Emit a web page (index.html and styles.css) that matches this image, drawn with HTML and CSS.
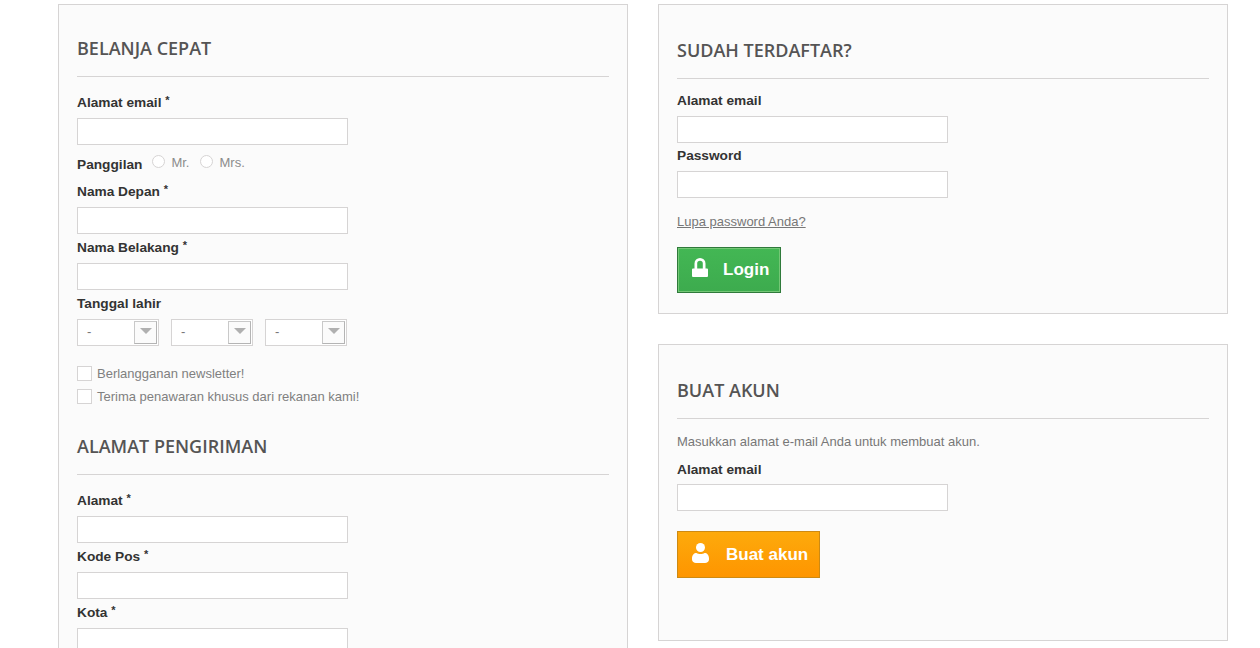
FILE: index.html
```html
<!DOCTYPE html>
<html lang="id">
<head>
<meta charset="utf-8">
<title>Belanja Cepat</title>
<link rel="stylesheet" href="styles.css">
</head>
<body>
<main class="page">
  <section class="box box-left">
    <h3 class="title">BELANJA CEPAT</h3>
    <label class="lbl lbl-first">Alamat email <sup>*</sup></label>
    <input class="field" type="text">
    <div class="gender">
      <span class="lbl">Panggilan</span>
      <span class="radio"></span><span class="opt">Mr.</span>
      <span class="radio"></span><span class="opt">Mrs.</span>
    </div>
    <label class="lbl lbl-name">Nama Depan <sup>*</sup></label>
    <input class="field" type="text">
    <label class="lbl">Nama Belakang <sup>*</sup></label>
    <input class="field" type="text">
    <label class="lbl">Tanggal lahir</label>
    <div class="dates">
      <div class="sel"><span>-</span><i class="arrow"></i></div>
      <div class="sel"><span>-</span><i class="arrow"></i></div>
      <div class="sel"><span>-</span><i class="arrow"></i></div>
    </div>
    <div class="check check-first"><span class="cb"></span>Berlangganan newsletter!</div>
    <div class="check"><span class="cb"></span>Terima penawaran khusus dari rekanan kami!</div>
    <h3 class="title title-sub">ALAMAT PENGIRIMAN</h3>
    <label class="lbl lbl-first">Alamat <sup>*</sup></label>
    <input class="field" type="text">
    <label class="lbl">Kode Pos <sup>*</sup></label>
    <input class="field" type="text">
    <label class="lbl">Kota <sup>*</sup></label>
    <input class="field" type="text">
  </section>
  <div class="col-right">
    <section class="box box-login">
      <h3 class="title">SUDAH TERDAFTAR?</h3>
      <label class="lbl lbl-tight">Alamat email</label>
      <input class="field" type="text">
      <label class="lbl lbl-pass">Password</label>
      <input class="field" type="password">
      <a class="forgot" href="#">Lupa password Anda?</a>
      <a class="btn btn-green" href="#">
        <svg class="ico ico-lock" width="16" height="19" viewBox="0 0 16 19"><path fill="#fff" fill-rule="evenodd" d="M2.500 10.500V5.500a5.500 5.500 0 0 1 11 0v5H15a1 1 0 0 1 1 1V18a1 1 0 0 1-1 1H1a1 1 0 0 1-1-1v-6.500a1 1 0 0 1 1-1zm2.700 0h5.600V5.500a2.800 2.800 0 0 0-5.600 0z"/></svg>
        <span>Login</span>
      </a>
    </section>
    <section class="box box-create">
      <h3 class="title">BUAT AKUN</h3>
      <p class="hint">Masukkan alamat e-mail Anda untuk membuat akun.</p>
      <label class="lbl">Alamat email</label>
      <input class="field" type="text">
      <a class="btn btn-orange" href="#">
        <svg class="ico ico-user" width="17" height="20" viewBox="0 0 17 20"><circle cx="8.500" cy="4.500" r="4.500" fill="#fff"/><path fill="#fff" d="M0 15.500C0 12 2 10 4.500 10c1 .8 2.400 1 4 1s3-.2 4-1C15 10 17 12 17 15.500v1C17 18.500 15 20 13 20H4c-2 0-4-1.500-4-3.500z"/></svg>
        <span>Buat akun</span>
      </a>
    </section>
  </div>
</main>
</body>
</html>
```

FILE: styles.css
```css
* { box-sizing: border-box; }
html, body { margin: 0; height: 648px; overflow: hidden; background: #fff; }
body { font-family: "Liberation Sans", Arial, sans-serif; font-size: 13px; color: #777; }
.page {
  display: grid;
  grid-template-columns: 570px 570px;
  column-gap: 30px;
  padding: 4px 0 0 58px;
  align-items: start;
  height: 648px;
  overflow: hidden;
}
.col-right { display: flex; flex-direction: column; gap: 30px; }
.box {
  background: #fbfbfb;
  border: 1px solid #d6d4d4;
  padding: 0 18px;
}
.box-left { padding-top: 28px; height: 644px; overflow: hidden; border-bottom: 0; }
.box-login { padding-top: 30px; height: 310px; }
.box-create { padding-top: 30px; height: 297px; }
.title {
  font-family: "Open Sans", sans-serif;
  font-weight: 600;
  font-size: 18px;
  line-height: 30px;
  color: #555454;
  margin: 0;
  padding-bottom: 13px;
  border-bottom: 1px solid #d6d4d4;
}
.title-sub { margin-top: 23px; }
.lbl {
  display: block;
  font-weight: 700;
  font-size: 13.7px;
  line-height: 18px;
  color: #333;
  margin: 5px 0 6px;
}
.lbl sup { font-size: 11px; line-height: 0; vertical-align: 3px; }
.lbl-first { margin-top: 17px; }
.lbl-tight { margin-top: 13px; }
.lbl-pass { margin-top: 4px; }
.field {
  display: block;
  width: 271px;
  height: 27px;
  border: 1px solid #d6d4d4;
  background: #fff;
  padding: 0;
  outline: 0;
  border-radius: 0;
}
.gender { display: flex; align-items: center; height: 18px; margin-top: 10px; }
.gender .lbl { margin: 2px 10px 0 0; }
.radio {
  width: 13px;
  height: 13px;
  border: 1px solid #d6d4d4;
  border-radius: 50%;
  background: #fff;
  margin: -5px 6px 0 0;
}
.opt { font-size: 13px; color: #8b8b8b; margin: -4px 11px 0 0; }
.lbl-name { margin-top: 10px; }
.dates { display: flex; gap: 12px; }
.sel {
  position: relative;
  width: 82px;
  height: 27px;
  border: 1px solid #d6d4d4;
  background: #fff;
  padding-left: 9px;
  line-height: 24px;
  font-size: 13px;
  color: #777;
}
.arrow {
  position: absolute;
  top: 1px;
  right: 1px;
  width: 23px;
  height: 23px;
  border: 1px solid #c9c9c9;
  border-bottom-color: #b4b4b4;
  border-right-color: #b4b4b4;
  background: #fbfbfb;
}
.arrow::after {
  content: "";
  position: absolute;
  left: 5px;
  top: 6px;
  border-style: solid;
  border-width: 6px 6px 0;
  border-color: #b0b0b0 transparent transparent;
}
.check {
  display: flex;
  align-items: center;
  font-size: 13px;
  line-height: 23px;
  height: 23px;
  color: #808080;
}
.check-first { margin-top: 16px; }
.cb {
  width: 15px;
  height: 15px;
  border: 1px solid #d6d4d4;
  background: #fff;
  margin-right: 5px;
}
.forgot {
  display: block;
  width: max-content;
  font-size: 13px;
  line-height: 18px;
  color: #777;
  text-decoration: underline;
  margin-top: 15px;
}
.btn {
  display: flex;
  align-items: center;
  width: max-content;
  height: 46px;
  color: #fff;
  font-weight: 700;
  font-size: 17px;
  text-decoration: none;
}
.ico-lock { margin-top: -5px; }
.ico-user { margin-top: -4px; }
.btn-green {
  margin-top: 16px;
  width: 104px;
  padding-left: 14px;
  gap: 15px;
  background: linear-gradient(#43b754, #3dab4e);
  border: 1px solid #2f7a3b;
  box-shadow: inset 0 0 0 1px #74c776;
}
.btn-orange {
  margin-top: 20px;
  width: 143px;
  height: 47px;
  padding-left: 14px;
  gap: 17px;
  background: linear-gradient(#fdaa0c, #fe9500);
  border: 1px solid #cd8a13;
}
.hint { margin: 14px 0 10px; font-size: 13px; line-height: 18px; color: #777; }
.hint + .lbl { margin-top: 0; margin-bottom: 5px; }
```
